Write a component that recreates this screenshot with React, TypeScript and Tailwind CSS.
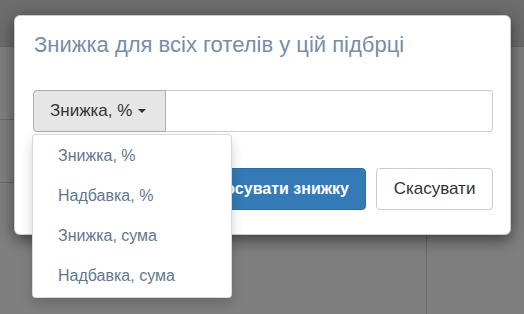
import React from "react";

export default function App() {
  const items = ["Знижка, %", "Надбавка, %", "Знижка, сума", "Надбавка, сума"];
  return (
    <div className="relative w-[524px] h-[314px] overflow-hidden bg-[#7f7f7f] font-['Liberation_Sans',Arial,sans-serif]">
      {/* backdrop page */}
      <div className="flex flex-col h-full">
        <div className="h-[47px] bg-[#6c6c6c] border-b border-[#666666]" />
        <div className="flex flex-1">
          <div className="w-[427px] border-r border-[#6a6a6a] flex flex-col">
            <div className="h-[73px] border-b border-[#6a6a6a]" />
            <div className="h-[63px] border-b border-[#6a6a6a]" />
          </div>
          <div className="flex-1" />
        </div>
      </div>

      {/* modal */}
      <div className="absolute left-[14px] top-[15px] w-[497px] h-[220px] bg-white border border-black/20 rounded-[6px] shadow-[0_5px_15px_rgba(0,0,0,0.5)] pl-[18px] pr-[17px] pt-[17px]">
        <h4 className="text-[22px] leading-[24px] text-[#768ea6] pl-[1px]">
          Знижка для всіх готелів у цій підбрці
        </h4>
        <div className="relative mt-[33px] flex h-[42px]">
          <button className="flex items-center gap-[6px] h-full w-[133px] pl-[16px] bg-[#e6e6e6] border border-[#adadad] rounded-l-[4px] text-[17px] text-[#333]">
            Знижка, %
            <span className="w-0 h-0 border-x-[4px] border-x-transparent border-t-[4px] border-t-[#333]" />
          </button>
          <div className="flex-1 border border-l-0 border-[#cccccc] rounded-r-[4px] bg-white" />
          <div className="absolute left-[-1px] top-[44px] z-10 w-[200px] bg-white border border-black/15 rounded-[4px] shadow-[0_6px_12px_rgba(0,0,0,0.175)] py-[1px]">
            {items.map((t) => (
              <div key={t} className="h-[40px] flex items-center pl-[25px] text-[16px] text-[#627891]">
                {t}
              </div>
            ))}
          </div>
        </div>
        <div className="mt-[36px] flex justify-end gap-[10px]">
          <button className="h-[42px] px-[16px] bg-[#337ab7] border border-[#2e6da4] rounded-[4px] text-white text-[16px] font-bold">
            Застосувати знижку
          </button>
          <button className="h-[42px] w-[117px] bg-white border border-[#cccccc] rounded-[4px] text-[#333] text-[17px]">
            Скасувати
          </button>
        </div>
      </div>
    </div>
  );
}
